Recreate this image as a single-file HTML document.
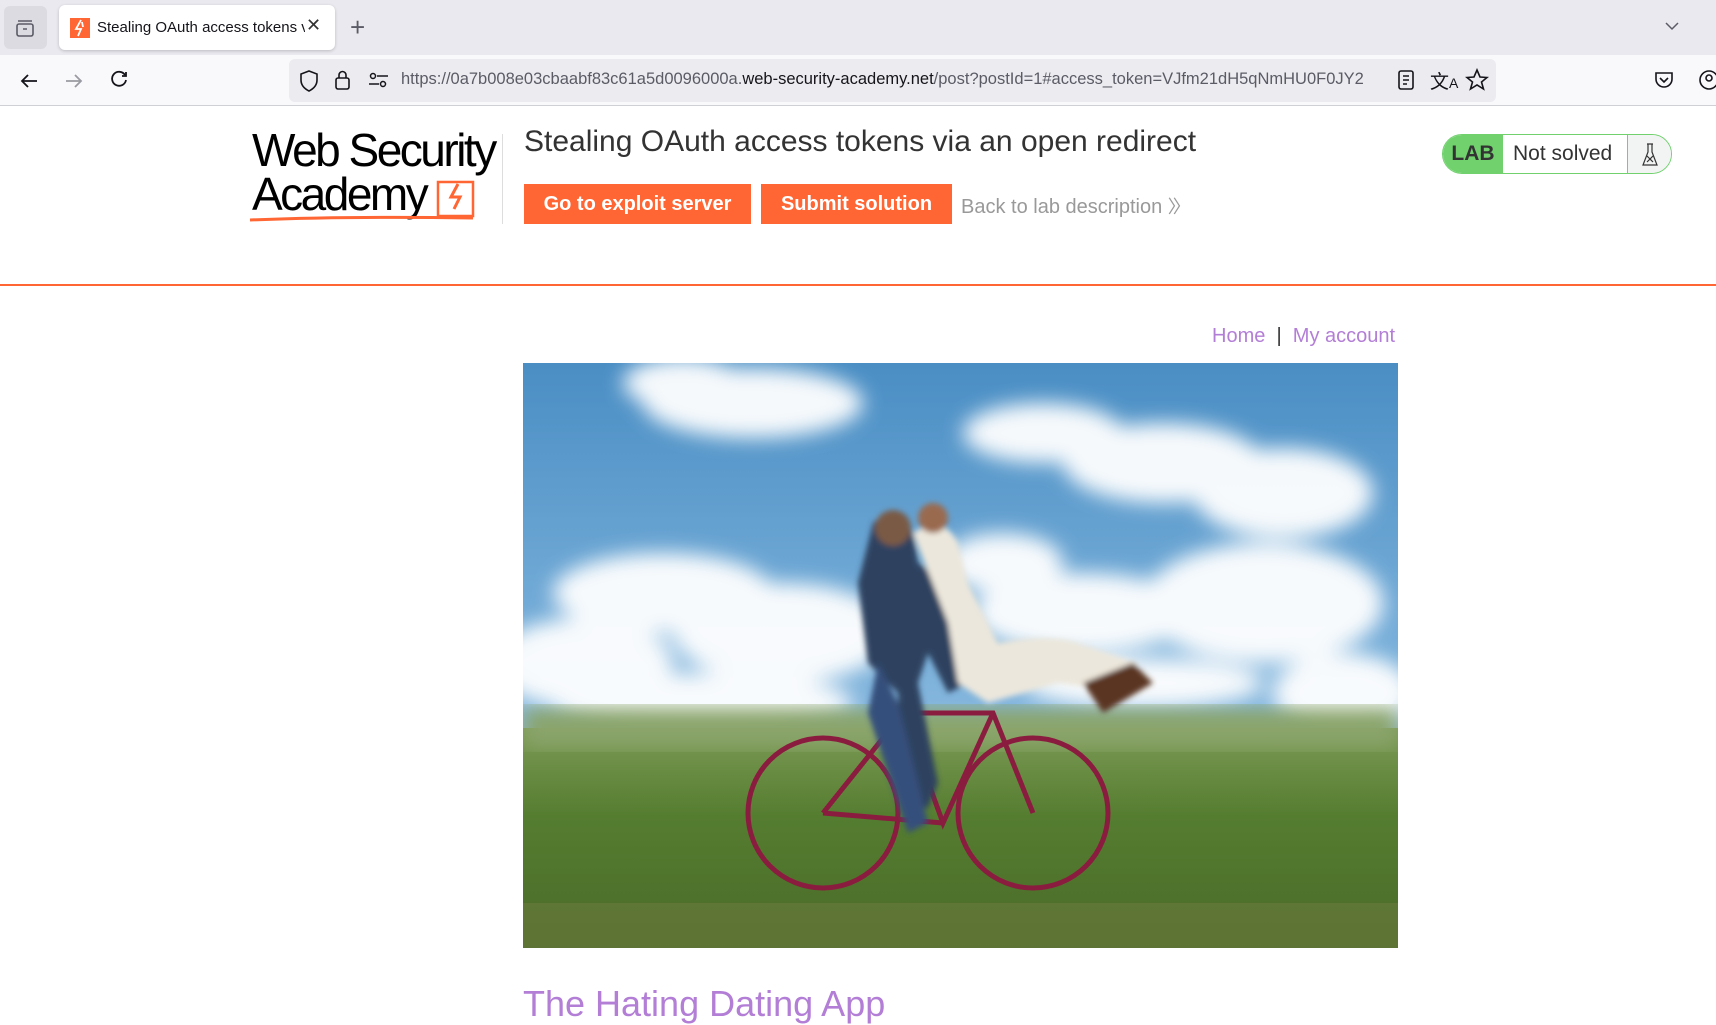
<!DOCTYPE html>
<html><head><meta charset="utf-8">
<style>
*{margin:0;padding:0;box-sizing:border-box}
html,body{width:1716px;height:1007px;overflow:hidden;background:#fff;font-family:"Liberation Sans",Arial,sans-serif}
.tabbar{position:absolute;left:0;top:0;width:1716px;height:55px;background:#eae9ef}
.navbar{position:absolute;left:0;top:55px;width:1716px;height:51px;background:#f9f9fb;border-bottom:1px solid #cfcfd6}
.abs{position:absolute}
.btn{position:absolute;top:184px;height:40px;background:#ff6633;color:#fff;font-weight:bold;font-size:20px;line-height:40px;text-align:center}
</style></head><body>
<div class="tabbar">
  <div class="abs" style="left:4px;top:6px;width:43px;height:43px;background:#dcdbe2;border-radius:6px"></div>
  <svg class="abs" style="left:14px;top:17px" width="22" height="22" viewBox="0 0 22 22" fill="none" stroke="#5b5b66" stroke-width="1.6"><rect x="3" y="7" width="16" height="12" rx="2"/><path d="M4 4h14M9 12h4"/></svg>
  <div class="abs" style="left:59px;top:5px;width:276px;height:45px;background:#fff;border-radius:6px;box-shadow:0 1px 3px rgba(0,0,0,.2)"></div>
  <div class="abs" style="left:70px;top:18px;width:20px;height:20px;background:#ff6633"></div>
  <svg class="abs" style="left:70px;top:18px" width="20" height="20"><path d="M11 2 L6 11 H11 L8 18 M12 4 L13 9" stroke="#fff" stroke-width="1.8" fill="none"/></svg>
  <div class="abs" style="left:97px;top:19px;font-size:15px;color:#15141a;white-space:nowrap;width:208px;overflow:hidden">Stealing OAuth access tokens vi</div>
  <div class="abs" style="left:306px;top:15px;font-size:18px;color:#333">✕</div>
  <div class="abs" style="left:350px;top:12px;font-size:26px;color:#5b5b66;font-weight:300">+</div>
  <svg class="abs" style="left:1664px;top:20px" width="16" height="12"><path d="M2 3l6 6 6-6" stroke="#5b5b66" stroke-width="1.5" fill="none"/></svg>
</div>
<div class="navbar">
  <svg class="abs" style="left:18px;top:15px" width="22" height="22" fill="none" stroke="#15141a" stroke-width="1.8"><path d="M19 11H4M10 5l-6 6 6 6"/></svg>
  <svg class="abs" style="left:63px;top:15px" width="22" height="22" fill="none" stroke="#9a9aa2" stroke-width="1.8"><path d="M3 11h15M12 5l6 6-6 6"/></svg>
  <svg class="abs" style="left:108px;top:14px" width="22" height="22" fill="none" stroke="#15141a" stroke-width="1.8"><path d="M17 6A7 7 0 1 0 18 11"/><path d="M18 3v4h-4"/></svg>
  <div class="abs" style="left:289px;top:4px;width:1207px;height:43px;background:#ececf0;border-radius:6px"></div>
  <svg class="abs" style="left:298px;top:14px" width="22" height="24" fill="none" stroke="#15141a" stroke-width="1.6"><path d="M11 2l8 3v6c0 6-4 9-8 11-4-2-8-5-8-11V5z"/></svg>
  <svg class="abs" style="left:333px;top:13px" width="20" height="24" fill="none" stroke="#15141a" stroke-width="1.6"><rect x="3" y="10" width="13" height="11" rx="2"/><path d="M6 10V7a3.5 3.5 0 0 1 7 0v3"/></svg>
  <svg class="abs" style="left:368px;top:16px" width="22" height="18" fill="none" stroke="#15141a" stroke-width="1.5"><path d="M9 5h11M1 13h10"/><circle cx="5" cy="5" r="2.5"/><circle cx="15" cy="13" r="2.5"/></svg>
  <div class="abs" style="left:401px;top:15px;font-size:16.5px;color:#5b5b66;white-space:nowrap;width:988px;overflow:hidden">https://0a7b008e03cbaabf83c61a5d0096000a.<span style="color:#15141a">web-security-academy.net</span>/post?postId=1#access_token=VJfm21dH5qNmHU0F0JY2</div>
  <svg class="abs" style="left:1396px;top:14px" width="20" height="22" fill="none" stroke="#15141a" stroke-width="1.6"><rect x="3" y="2" width="14" height="18" rx="2"/><path d="M7 7h6M7 11h6M7 15h4"/></svg>
  <div class="abs" style="left:1430px;top:12px;font-size:19px;color:#15141a">文<span style="font-size:14px">A</span></div>
  <svg class="abs" style="left:1465px;top:13px" width="24" height="24" fill="none" stroke="#15141a" stroke-width="1.6"><path d="M12 2l3 7 7 .5-5.5 4.5 2 7-6.5-4-6.5 4 2-7L2 9.5 9 9z"/></svg>
  <svg class="abs" style="left:1653px;top:14px" width="22" height="22" fill="none" stroke="#15141a" stroke-width="1.6"><path d="M3 4h16v6a8 8 0 0 1-16 0z"/><path d="M7 9l4 4 4-4"/></svg>
  <svg class="abs" style="left:1698px;top:13px" width="22" height="24" fill="none" stroke="#15141a" stroke-width="1.6"><circle cx="11" cy="12" r="9"/><circle cx="11" cy="10" r="3"/></svg>
</div>

<div class="abs" style="left:252px;top:128px;font-size:46px;letter-spacing:-2.5px;color:#000;line-height:44px;font-weight:500">Web Security<br>Academy</div>
<svg class="abs" style="left:248px;top:178px" width="230" height="44"><path d="M190 38 L190 4 L225 4 L225 38 Z" fill="none" stroke="#ff6633" stroke-width="2.5"/><path d="M210 6l-7 13h9l-6 12" stroke="#ff6633" stroke-width="3" fill="none"/><path d="M2 42 Q100 38 225 40" stroke="#ff6633" stroke-width="3" fill="none"/></svg>
<div class="abs" style="left:502px;top:134px;width:1px;height:90px;background:#ddd"></div>
<div class="abs" style="left:524px;top:125px;font-size:30px;color:#333;white-space:nowrap">Stealing OAuth access tokens via an open redirect</div>
<div class="btn" style="left:524px;width:227px">Go to exploit server</div>
<div class="btn" style="left:761px;width:191px">Submit solution</div>
<div class="abs" style="left:961px;top:193px;font-size:20px;color:#999;white-space:nowrap">Back to lab description <span style="font-size:18px;letter-spacing:-4px">〉〉</span></div>
<div class="abs" style="left:1442px;top:134px;width:230px;height:40px;border:1.5px solid #70d16d;border-radius:20px;overflow:hidden;background:#fff">
  <div class="abs" style="left:0;top:0;width:60px;height:40px;background:#70d16d;color:#333;font-weight:bold;font-size:21px;line-height:38px;text-align:center">LAB</div>
  <div class="abs" style="left:70px;top:7px;font-size:21px;color:#333">Not solved</div>
  <div class="abs" style="left:184px;top:0;width:46px;height:40px;border-left:1.5px solid #70d16d;background:#f1f4f3"></div>
  <svg class="abs" style="left:197px;top:7px" width="20" height="26" fill="none" stroke="#333" stroke-width="1.2"><path d="M7 2h6M8 2v8L3 23h14L12 10V2M7 14l6 6M13 14l-6 6"/></svg>
</div>
<div class="abs" style="left:0;top:284px;width:1716px;height:2px;background:#ff6633"></div>

<div class="abs" style="left:1212px;top:325px;font-size:20px;color:#b37ed6;white-space:nowrap">Home&nbsp;&nbsp;<span style="color:#333">|</span>&nbsp;&nbsp;My account</div>

<svg class="abs" style="left:523px;top:363px" width="875" height="585" viewBox="0 0 875 585">
<defs>
<linearGradient id="sky" x1="0" y1="0" x2="0" y2="1"><stop offset="0" stop-color="#4a8ec4"/><stop offset=".5" stop-color="#7ab0da"/><stop offset="1" stop-color="#b5d2e8"/></linearGradient>
<linearGradient id="gr" x1="0" y1="0" x2="0" y2="1"><stop offset="0" stop-color="#7c9a55"/><stop offset=".4" stop-color="#557d30"/><stop offset="1" stop-color="#4a6a28"/></linearGradient>
<filter id="b"><feGaussianBlur stdDeviation="10"/></filter>
<filter id="b2"><feGaussianBlur stdDeviation="3"/></filter>
</defs>
<rect width="875" height="585" fill="url(#sky)"/>
<g fill="#fff" filter="url(#b)" opacity=".95">
<ellipse cx="230" cy="40" rx="110" ry="35"/><ellipse cx="160" cy="20" rx="60" ry="25"/>
<ellipse cx="520" cy="70" rx="80" ry="30"/><ellipse cx="640" cy="100" rx="100" ry="40"/><ellipse cx="760" cy="130" rx="90" ry="45"/>
<ellipse cx="140" cy="230" rx="110" ry="40"/><ellipse cx="60" cy="300" rx="90" ry="45"/><ellipse cx="260" cy="270" rx="110" ry="50"/>
<ellipse cx="480" cy="200" rx="60" ry="30"/><ellipse cx="560" cy="250" rx="110" ry="40"/><ellipse cx="740" cy="240" rx="120" ry="60"/>
<ellipse cx="820" cy="330" rx="70" ry="40"/><ellipse cx="180" cy="340" rx="150" ry="30"/><ellipse cx="620" cy="320" rx="120" ry="25"/>
</g>
<rect y="365" width="875" height="220" fill="url(#gr)"/>
<rect y="345" width="875" height="40" fill="#8aa46a" filter="url(#b)"/>
<rect y="540" width="875" height="45" fill="#6b7a3e" opacity=".6"/>
<g fill="none" stroke="#8a1d3f" stroke-width="5">
<circle cx="300" cy="450" r="75"/><circle cx="510" cy="450" r="75"/>
<path d="M300 450 L380 350 L470 350 L510 450 M380 350 L420 460 L470 350 M420 460 L300 450"/>
</g>
<g filter="url(#b2)">
<path d="M350 160 q25 -20 40 10 l5 30 q20 10 30 60 l20 60 -20 10 -20 -40 -10 30 20 100 -10 25 -25 -5 -5 -110 -30 -30 -10 -80 z" fill="#2f4260"/>
<path d="M355 300 l20 40 30 120 -20 10 -40 -120z" fill="#35507c"/>
<path d="M390 170 q30 -20 45 10 l10 40 q10 20 30 60 q50 -10 80 0 l60 20 -10 30 -70 -10 -70 20 -30 -20 -10 -60z" fill="#ece7dc"/>
<path d="M560 320 l50 -20 20 20 -50 30z" fill="#5a3520"/>
<circle cx="370" cy="165" r="18" fill="#7a5a45"/><circle cx="410" cy="155" r="15" fill="#9a6a50"/>
</g>
</svg>

<div class="abs" style="left:523px;top:983px;font-size:36px;color:#b37ed6;white-space:nowrap">The Hating Dating App</div>
</body></html>
